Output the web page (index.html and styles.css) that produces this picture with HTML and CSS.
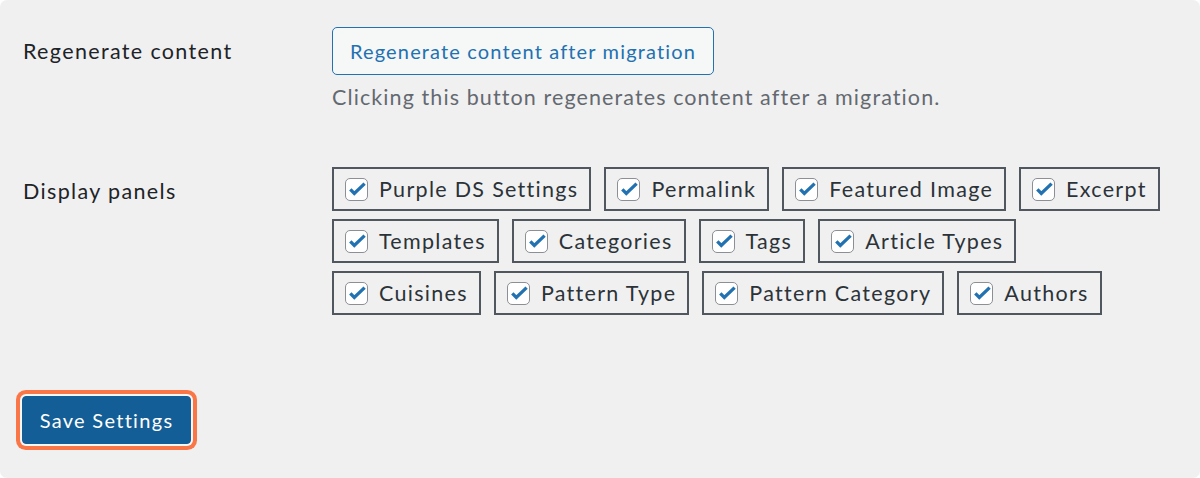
FILE: index.html
```html
<!DOCTYPE html>
<html>
<head>
<meta charset="utf-8">
<link rel="stylesheet" href="styles.css">
</head>
<body>
<div class="page">
  <div class="row">
    <div class="row-label">Regenerate content</div>
    <div class="row-field">
      <button class="btn-secondary">Regenerate content after migration</button>
      <p class="description">Clicking this button regenerates content after a migration.</p>
    </div>
  </div>
  <div class="row row-panels">
    <div class="row-label">Display panels</div>
    <div class="row-field">
      <div class="panels">
        <label class="panel"><span class="cb"><svg viewBox="0 0 20 20"><path d="M4.3 10.3L8.3 14.4L18.6 4.6"/></svg></span>Purple DS Settings</label>
        <label class="panel"><span class="cb"><svg viewBox="0 0 20 20"><path d="M4.3 10.3L8.3 14.4L18.6 4.6"/></svg></span>Permalink</label>
        <label class="panel"><span class="cb"><svg viewBox="0 0 20 20"><path d="M4.3 10.3L8.3 14.4L18.6 4.6"/></svg></span>Featured Image</label>
        <label class="panel"><span class="cb"><svg viewBox="0 0 20 20"><path d="M4.3 10.3L8.3 14.4L18.6 4.6"/></svg></span>Excerpt</label>
        <label class="panel"><span class="cb"><svg viewBox="0 0 20 20"><path d="M4.3 10.3L8.3 14.4L18.6 4.6"/></svg></span>Templates</label>
        <label class="panel"><span class="cb"><svg viewBox="0 0 20 20"><path d="M4.3 10.3L8.3 14.4L18.6 4.6"/></svg></span>Categories</label>
        <label class="panel"><span class="cb"><svg viewBox="0 0 20 20"><path d="M4.3 10.3L8.3 14.4L18.6 4.6"/></svg></span>Tags</label>
        <label class="panel"><span class="cb"><svg viewBox="0 0 20 20"><path d="M4.3 10.3L8.3 14.4L18.6 4.6"/></svg></span>Article Types</label>
        <label class="panel"><span class="cb"><svg viewBox="0 0 20 20"><path d="M4.3 10.3L8.3 14.4L18.6 4.6"/></svg></span>Cuisines</label>
        <label class="panel"><span class="cb"><svg viewBox="0 0 20 20"><path d="M4.3 10.3L8.3 14.4L18.6 4.6"/></svg></span>Pattern Type</label>
        <label class="panel"><span class="cb"><svg viewBox="0 0 20 20"><path d="M4.3 10.3L8.3 14.4L18.6 4.6"/></svg></span>Pattern Category</label>
        <label class="panel"><span class="cb"><svg viewBox="0 0 20 20"><path d="M4.3 10.3L8.3 14.4L18.6 4.6"/></svg></span>Authors</label>
      </div>
    </div>
  </div>
  <div class="actions">
    <button class="btn-primary">Save Settings</button>
  </div>
</div>
</body>
</html>
```

FILE: styles.css
```css
* { box-sizing: border-box; }
html, body { margin: 0; padding: 0; background: #ffffff; }
body {
  font-family: "Lato", "Open Sans", sans-serif;
  color: #1d2327;
}
.page {
  width: 1200px;
  height: 478px;
  background: #f0f0f1;
  border-radius: 7px;
  padding: 27px 23px 0 23px;
}
.row {
  display: grid;
  grid-template-columns: 309px 1fr;
  align-items: baseline;
}
.row-label {
  font-size: 21.5px;
  letter-spacing: 1.35px;
  color: #1d2327;
}
.btn-secondary {
  font-family: inherit;
  font-size: 20px;
  letter-spacing: 1.15px;
  color: #2271b1;
  background: #f6f7f7;
  border: 1.5px solid #2271b1;
  border-radius: 5px;
  height: 48px;
  width: 382px;
  padding: 0;
  cursor: pointer;
}
.description {
  margin: 7px 0 0 0;
  font-size: 21.5px;
  letter-spacing: 1.1px;
  line-height: 30px;
  color: #646970;
}
.row-panels { margin-top: 55px; }
.panels {
  display: flex;
  flex-wrap: wrap;
  gap: 8px 13px;
}
.panel {
  display: inline-flex;
  align-items: center;
  gap: 11px;
  height: 44px;
  padding: 0 11px 0 11px;
  border: 2px solid #50575e;
  font-size: 21.5px;
  letter-spacing: 1.3px;
  color: #2c3338;
}
.cb {
  width: 23px;
  height: 23px;
  border: 1.5px solid #8c8f94;
  border-radius: 5px;
  background: #ffffff;
  display: inline-flex;
  flex: none;
}
.cb svg {
  width: 20px;
  height: 20px;
  overflow: visible;
  fill: none;
  stroke: #2271b1;
  stroke-width: 3.3;
}
.actions { margin-top: 81px; margin-left: -1px; }
.btn-primary {
  font-family: inherit;
  font-size: 20px;
  letter-spacing: 1.3px;
  color: #ffffff;
  background: #135e96;
  border: 1px solid #135e96;
  border-radius: 4px;
  height: 48px;
  width: 169px;
  padding: 0;
  box-shadow: 0 0 0 2px #f6f7f7, 0 0 0 6px #fb7647;
  cursor: pointer;
}
```
